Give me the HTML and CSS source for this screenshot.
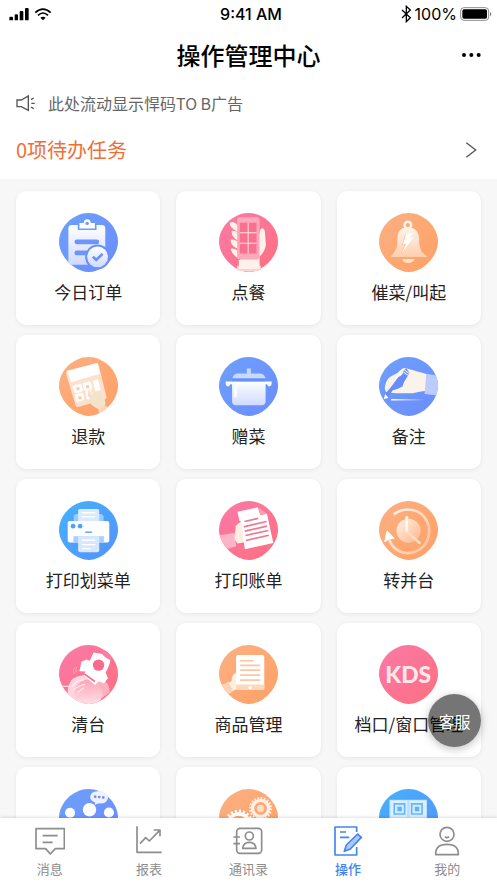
FILE: index.html
```html
<!DOCTYPE html>
<html lang="zh-CN">
<head>
<meta charset="utf-8">
<meta name="viewport" content="width=device-width, initial-scale=1">
<title>操作管理中心</title>
<link rel="stylesheet" href="styles.css">
</head>
<body>
<svg class="defs" aria-hidden="true">
  <defs>
    <path id="blob" d="M88 0C134 0 176 41 176 86C176 129 132 176 89 176C46 176 0 129 0 86C0 41 43 0 88 0Z"/>
    <clipPath id="clip"><use href="#blob"/></clipPath>
    <linearGradient id="blue" x1="0" y1="0" x2="1" y2="1"><stop offset="0" stop-color="#6da0fb"/><stop offset="1" stop-color="#6c8cfd"/></linearGradient>
    <linearGradient id="sky" x1="0" y1="0" x2="1" y2="1"><stop offset="0" stop-color="#44b2fb"/><stop offset="1" stop-color="#5592fd"/></linearGradient>
    <linearGradient id="pink" x1="0" y1="0" x2="1" y2="1"><stop offset="0" stop-color="#fb7aa8"/><stop offset="1" stop-color="#fe6f80"/></linearGradient>
    <linearGradient id="orange" x1="0" y1="0" x2="1" y2="1"><stop offset="0" stop-color="#fcb082"/><stop offset="1" stop-color="#fea066"/></linearGradient>
    <linearGradient id="paper" x1="0" y1="0" x2="0" y2="1"><stop offset="0" stop-color="#fff"/><stop offset="1" stop-color="#cfdafe"/></linearGradient>
    <linearGradient id="bell" x1="0" y1="0" x2="0" y2="1"><stop offset="0" stop-color="#fff4ec"/><stop offset="1" stop-color="#fecfae"/></linearGradient>
    <linearGradient id="moon" x1="0" y1="0" x2="0" y2="1"><stop offset="0" stop-color="#fda5b8"/><stop offset="1" stop-color="#ffe3e9"/></linearGradient>
    <linearGradient id="line" x1="0" y1="0" x2="1" y2="0"><stop offset="0" stop-color="#fff"/><stop offset="1" stop-color="#fff" stop-opacity="0"/></linearGradient>
    <linearGradient id="arc" gradientUnits="userSpaceOnUse" x1="190" y1="90" x2="290" y2="170"><stop offset="0" stop-color="#fff4ea"/><stop offset="1" stop-color="#fec9a4"/></linearGradient>
    <linearGradient id="dial" x1="0" y1="0" x2="1" y2="1"><stop offset="0" stop-color="#fff2e6"/><stop offset="1" stop-color="#fdb588"/></linearGradient>
  </defs>
</svg>
<div class="app">
  <div class="status">
    <div class="status-side">
      <svg width="20" height="14" viewBox="27 18 60 42"><path d="M28 50q0-3 3-3h5q3 0 3 3v8H28zM44 43q0-3 3-3h4q3 0 3 3v15H44zM59 33q0-3 3-3h5q3 0 3 3v25H59zM75 24q0-3 3-3h5q3 0 3 3v34H75z"/></svg>
      <svg width="18" height="14" viewBox="101 18 54 42"><path d="M105 35q23-21 46 0M113 43q15-14 30 0" fill="none" stroke="#000" stroke-width="5"/><path d="M120 50q8-6 16 0l-8 8z"/></svg>
    </div>
    <div class="time">9:41 AM</div>
    <div class="status-side status-right">
      <svg width="11" height="18" viewBox="459 13 33 54"><path d="M462 28L487 51L475 63V17L487 28L462 52" fill="none" stroke="#000" stroke-width="4"/></svg>
      <span>100%</span>
      <svg width="33" height="16" viewBox="635 15 99 48"><rect x="637" y="20" width="84" height="38" rx="10" fill="none" stroke="#8c8c8c" stroke-width="3"/><rect x="642" y="25" width="74" height="28" rx="5"/><path d="M725 33q8 6 0 13z" fill="#777"/></svg>
    </div>
  </div>
  <header class="titlebar">
    <h1>操作管理中心</h1>
    <button class="more"><svg width="20" height="8" viewBox="0 0 60 24"><circle cx="9" cy="12" r="6"/><circle cx="31" cy="12" r="6"/><circle cx="53" cy="12" r="6"/></svg></button>
  </header>
  <div class="notice">
    <svg width="20" height="18" viewBox="50 282 60 54" fill="none" stroke="#555" stroke-width="4"><path d="M53 300V320H66L87 331V288L66 300ZM95 299l8-5M96 310h10M95 321l8 5"/></svg>
    <span>此处流动显示悍码TO B广告</span>
  </div>
  <a class="todo" href="#">
    <span>0项待办任务</span>
    <svg width="12" height="18" viewBox="653 426 36 54"><path d="M657 431L685 453L657 475" fill="none" stroke="#555" stroke-width="4"/></svg>
  </a>
  <main class="grid">
    <button class="card">
      <svg class="icon" viewBox="0 0 176 176"><use href="#blob" fill="url(#blue)"/><g transform="translate(-147 -83)">
        <rect x="175" y="119" width="110" height="118" rx="10" fill="url(#paper)"/>
        <path d="M203 134V113H217Q217 98 232 98T247 113H259V134Z" fill="#6c9afb"/>
        <path d="M208 129V113H221Q221 102 231 102T242 113H254V129Z" fill="#fff"/><circle cx="231" cy="114" r="5" fill="#6c9afb"/>
        <path d="M200 169H260M200 202H238" stroke="#6b95fb" stroke-width="14" stroke-linecap="round"/>
        <circle cx="262" cy="214" r="37" fill="#6b8ffc"/><circle cx="262" cy="214" r="31" fill="url(#paper)"/>
        <path d="M248 213L258 223L277 205" fill="none" stroke="#6b8ffc" stroke-width="8"/></g></svg>
      <span>今日订单</span>
    </button>
    <button class="card">
      <svg class="icon" viewBox="0 0 176 176"><use href="#blob" fill="url(#pink)"/><g transform="translate(-148 -82)" fill="#fdf1e9">
        <path d="M264 165L271 133Q274 125 280 128Q285 131 285 139L288 178Q284 198 269 212V224H211V200H264Z"/>
        <path d="M182 112Q191 107 203 120L216 140Q206 142 196 132Q181 122 182 112ZM187 137Q197 135 213 151L215 167Q187 158 187 137ZM184 163Q194 160 211 174L213 190Q186 184 184 163ZM184 190Q193 186 211 202L212 216Q191 212 184 190Z" stroke="#fdf1e9" stroke-width="3"/>
        <path d="M202 239H273V253Q238 261 202 253Z" fill="#fcd0d4"/><path d="M207 222H269V249H207Z"/>
        <rect x="202" y="95" width="67" height="126" rx="9" fill="#fda9bb"/>
        <path d="M210 111H260V203H210Z" fill="#f9718f"/><path d="M235 111V203M210 141H260M210 172H260" stroke="#fde6e6" stroke-width="3"/></g></svg>
      <span>点餐</span>
    </button>
    <button class="card">
      <svg class="icon" viewBox="0 0 176 176"><use href="#blob" fill="url(#orange)"/><g transform="translate(-149 -82)">
        <circle cx="235" cy="118" r="10" fill="none" stroke="#fff3ea" stroke-width="7"/>
        <path d="M235 124C207 126 204 145 204 164C204 190 195 199 184 211V213H291V211C275 199 269 188 269 164C269 145 263 126 235 124Z" fill="url(#bell)"/>
        <path d="M217 219H256Q249 231 236 231T217 219Z" fill="#fee2cd"/>
        <path d="M226 148L243 144L238 159L252 155L214 205L226 176L218 178Z" fill="#fda574" opacity=".65"/>
        <path d="M230 145L249 142L240 157L253 154L216 203L230 173L220 176Z" fill="#fff"/></g></svg>
      <span>催菜/叫起</span>
    </button>
    <button class="card">
      <svg class="icon" viewBox="0 0 176 176"><use href="#blob" fill="url(#orange)"/><g clip-path="url(#clip)"><g transform="translate(-147 -65)">
        <path d="M174 106L257 84Q264 83 266 91L289 186L284 192L204 214Q198 215 196 208L168 115Q167 108 174 106Z" fill="#fee0cc"/>
        <path d="M171 106L262 83L269 115L183 140Z" fill="#fff"/>
        <path d="M190 150l19-5q5-1 6 4l3 14q1 5-4 6l-14 4q-6 1-7-4l-5-13q-1-5 2-6ZM221 142l15-4q6-1 7 5l3 13q1 5-4 6l-14 4q-5 1-7-5l-3-13q-1-5 3-6ZM197 176l16-4q6-1 7 4l2 13q1 5-4 6l-14 4q-5 1-6-5l-3-12q-1-5 2-6ZM226 168l16-4 8 22-14 6q-6 1-8-5ZM247 136l16-5 9 32-16 5Z" fill="#fff"/>
        <path d="M199 155h9v9h-9zM228 149h9v9h-9zM205 182h9v9h-9zM233 174h8v9h-8z" fill="#fdc8a8"/>
        <path d="M233 169Q236 163 241 169L246 178Q254 169 264 170Q277 174 278 186Q290 199 283 211L289 220L268 235L266 221Q242 210 240 199Z" fill="#f3e3ca"/>
        <path d="M264 222L288 210L297 222L268 242Z" fill="#fed3b9"/></g></g></svg>
      <span>退款</span>
    </button>
    <button class="card">
      <svg class="icon" viewBox="0 0 176 176"><use href="#blob" fill="url(#blue)"/><g transform="translate(-627 -65)">
        <path d="M710 114V99H722V114ZM667 129Q669 115 682 114H750Q763 115 766 129Z" fill="#c8d9ff"/>
        <path d="M647 138H784V145Q783 153 775 153L770 146H766V198Q766 209 754 209H678Q666 209 666 198V146H661L656 153Q648 153 647 145Z" fill="url(#paper)"/>
        <rect x="673" y="148" width="7" height="38" rx="3" fill="#fff"/><path d="M666 129H766V137H666Z" fill="#6791fa"/></g></svg>
      <span>赠菜</span>
    </button>
    <button class="card">
      <svg class="icon" viewBox="0 0 176 176"><use href="#blob" fill="url(#blue)"/><g clip-path="url(#clip)"><g transform="translate(-149 -65)">
        <path d="M170 170L166 158Q169 132 184 123L205 112Q216 98 227 98L291 116L289 166Q270 168 250 173H200Z" fill="#faf3e9"/>
        <path d="M290 115L325 121V180L285 175Z" fill="#bdccff"/>
        <path d="M182 158L207 125Q221 119 221 108L230 98L240 112L231 128Q222 141 219 153Q205 161 190 164L175 186L166 176Z" fill="#668dfa"/>
        <path d="M225 104L239 114M222 110L235 119" stroke="#faf3e9" stroke-width="3"/><path d="M163 190L168 175L177 187Z" fill="#fff"/>
        <path d="M185 190H286V195H185Z" fill="url(#line)"/></g></g></svg>
      <span>备注</span>
    </button>
    <button class="card">
      <svg class="icon" viewBox="0 0 176 176"><use href="#blob" fill="url(#sky)"/><g transform="translate(-147 -63)">
        <path d="M191 124V106L197 102H274L280 108V124Z" fill="#9acbff"/><rect x="204" y="87" width="63" height="46" rx="5" fill="#d7eaff"/>
        <path d="M215 98H255M215 110H255" stroke="#fff" stroke-width="4"/>
        <rect x="173" y="123" width="124" height="64" rx="6" fill="#fff"/><circle cx="189" cy="138" r="7" fill="#50a1fc"/><circle cx="210" cy="138" r="7" fill="#50a1fc"/>
        <path d="M225 156H246" stroke="#50a1fc" stroke-width="4"/><path d="M190 168H281V187H190Z" fill="#a6cffe"/><path d="M204 168H267V210Q267 216 261 216H210Q204 216 204 210Z" fill="#d6e8ff"/>
        <path d="M216 180H255M216 193H255M216 205H241" stroke="#fff" stroke-width="4"/></g></svg>
      <span>打印划菜单</span>
    </button>
    <button class="card">
      <svg class="icon" viewBox="0 0 176 176"><use href="#blob" fill="url(#pink)"/><g clip-path="url(#clip)"><g transform="translate(-627 -63)">
        <path d="M627 166L674 158L678 198L638 210Z" fill="#feb3c7"/><path d="M694 123L677 137L673 176L682 190L704 186Z" fill="#fdefe4"/>
        <path d="M682 95L743 82L750 105L770 101L789 188L704 207L693 124L688 122Z" fill="#fff"/><path d="M746 83L770 101L750 105Z" fill="#fca0b0"/>
        <path d="M703 124L744 115M701 140L769 124M704 153L770 138M706 166L774 151M707 181L776 165" stroke="#ef7893" stroke-width="5"/></g></g></svg>
      <span>打印账单</span>
    </button>
    <button class="card">
      <svg class="icon" viewBox="0 0 176 176"><use href="#blob" fill="url(#orange)"/><g transform="translate(-149 -63)">
        <path d="M193 103C227 78 274 86 292 123C309 161 292 203 255 215C223 226 192 210 180 180" fill="none" stroke="url(#arc)" stroke-width="8"/>
        <path d="M173 153L193 174L181 176L166 184Z" fill="#fff" stroke="#fff" stroke-width="3" stroke-linejoin="round"/><circle cx="237" cy="152" r="36" fill="url(#dial)"/>
        <path d="M232 112V154L270 188" fill="none" stroke="#ffdcc2" stroke-width="8" stroke-linecap="round" stroke-linejoin="round"/><path d="M232 112V151" stroke="#fff7ee" stroke-width="8" stroke-linecap="round"/></g></svg>
      <span>转并台</span>
    </button>
    <button class="card">
      <svg class="icon" viewBox="0 0 176 176"><use href="#blob" fill="url(#pink)"/><g clip-path="url(#clip)"><g transform="translate(-147 -60)">
        <path d="M254 180Q263 157 278 162Q299 172 298 202L276 218Z" fill="#fdb0c0"/>
        <path d="M172 214Q172 180 184 165Q196 151 222 150L248 174L225 231L194 230Z" fill="#ffd3df"/>
        <ellipse cx="235" cy="203" rx="42" ry="40" fill="url(#moon)"/>
        <path d="M154 183H183M185 185Q196 167 222 164M190 193Q210 180 225 177M202 202L222 187" fill="none" stroke="#fff0f3" stroke-width="3"/>
        <path d="M275 78Q285 73 297 78Q306 87 302 101L290 109L272 90Z" fill="#fc7ca3"/>
        <path d="M250 82Q263 84 276 87Q283 98 300 105Q299 119 286 142L293 159L281 174L265 168L255 179L220 151L226 139L208 138L214 110L229 103L239 107Z" fill="#fff"/>
        <circle cx="265" cy="120" r="17" fill="#f96a91"/><path d="M222 146L254 169" stroke="#f86b90" stroke-width="5"/>
        <path d="M193 126q-6 10 0 20M200 125q-5 10 0 17" fill="none" stroke="#fdb5ca" stroke-width="2"/></g></g></svg>
      <span>清台</span>
    </button>
    <button class="card">
      <svg class="icon" viewBox="0 0 176 176"><use href="#blob" fill="url(#orange)"/><g clip-path="url(#clip)"><g transform="translate(-627 -60)">
        <path d="M634 180L657 168L674 195L655 207Z" fill="#fed2b6"/><path d="M679 141Q662 151 665 167L656 174L669 195L687 190Z" fill="#fff0df"/>
        <rect x="678" y="90" width="84" height="104" rx="5" fill="#fff"/><path d="M678 178H762V189Q762 194 757 194H683Q678 194 678 189Z" fill="#fed8bd"/><circle cx="720" cy="187" r="5" fill="#fff"/>
        <path d="M689 107H729M690 121H750M690 135H750M690 150H750M690 165H750" stroke="#fcc6a4" stroke-width="5"/></g></g></svg>
      <span>商品管理</span>
    </button>
    <button class="card">
      <svg class="icon" viewBox="0 0 176 176"><use href="#blob" fill="url(#pink)"/><text class="kds" x="87" y="114" text-anchor="middle">KDS</text></svg>
      <span>档口/窗口管理</span>
    </button>
    <button class="card">
      <svg class="icon" viewBox="0 0 176 176"><use href="#blob" fill="url(#blue)"/><g clip-path="url(#clip)"><g transform="translate(-177 -75)" fill="#fff">
        <circle cx="210" cy="146" r="15"/><circle cx="268" cy="137" r="20"/><circle cx="326" cy="145" r="15"/><path d="M190 185q20-35 40 0v40h-40zM240 180q28-30 56 0v50h-56zM306 185q20-35 40 0v40h-40z"/></g></g>
        <g transform="translate(-177 -75)" fill="#6d8ffc"><path d="M291 82H306Q323 84 323 101Q321 117 304 118Q292 117 283 123L285 115Q270 111 270 99Q272 83 291 82Z" fill="#eef2ff"/><circle cx="285" cy="98" r="4"/><circle cx="297" cy="99" r="4"/><circle cx="309" cy="100" r="4"/></g></svg>
    </button>
    <button class="card">
      <svg class="icon" viewBox="0 0 176 176"><use href="#blob" fill="url(#orange)"/><g clip-path="url(#clip)"><g transform="translate(-657 -75)" fill="none">
        <circle cx="781" cy="133" r="31" stroke="#fff1e7" stroke-width="7" stroke-dasharray="5 4.7"/><circle cx="781" cy="133" r="24" stroke="#fff1e7" stroke-width="10"/><circle cx="781" cy="133" r="11" fill="#ffe0ca"/>
        <circle cx="716" cy="180" r="39" stroke="#fff" stroke-width="9" stroke-dasharray="6 6.2"/><circle cx="716" cy="180" r="31" stroke="#fff" stroke-width="11"/></g></g></svg>
    </button>
    <button class="card">
      <svg class="icon" viewBox="0 0 176 176"><use href="#blob" fill="url(#sky)"/><g transform="translate(-1139 -75)">
        <path d="M1170 107H1282V205H1170Z" fill="#b9e0ff"/><path d="M1173 109H1223V160H1173ZM1230 109H1280V160H1230Z" fill="#dceeff"/>
        <path d="M1182 117H1218V152H1182ZM1234 117H1270V152H1234Z" fill="#65b8fd"/><path d="M1187 122H1213V147H1187ZM1239 122H1265V147H1239Z" fill="#d5ebff"/><path d="M1194 128H1207V141H1194ZM1246 128H1259V141H1246Z" fill="#5cb0fc"/></g></svg>
    </button>
  </main>
  <nav class="tabs">
    <a href="#"><svg viewBox="104 183 90 90"><path d="M107 191H192V251H165L150 267L136 251H107Z"/><path d="M127 212H172M127 232H157"/></svg><span>消息</span></a>
    <a href="#"><svg viewBox="403 183 90 90"><path d="M412 184V262H486M421 236L438 218L449 228L480 196M462 195H481V214"/></svg><span>报表</span></a>
    <a href="#"><svg viewBox="701 183 90 90"><rect x="712" y="190" width="75" height="75" rx="10"/><circle cx="750" cy="213" r="12"/><path d="M730 250Q732 232 750 232T770 250ZM702 216H722M702 236H722"/></svg><span>通讯录</span></a>
    <a href="#" class="active"><svg viewBox="999 183 90 90"><path d="M1070 201V186H1005V270H1070V246M1020 201H1038M1020 217H1048"/><path d="M1073 207L1084 217L1051 252L1033 259L1039 240Z" fill="#a9cafb"/></svg><span>操作</span></a>
    <a href="#"><svg viewBox="1297 183 90 90"><circle cx="1342" cy="208" r="21"/><path d="M1336 215Q1342 221 1348 215M1308 269Q1307 238 1342 238T1376 269Z"/></svg><span>我的</span></a>
  </nav>
  <button class="service">客服</button>
</div>
</body>
</html>
```

FILE: styles.css
```css
* { box-sizing: border-box; }
body {
  margin: 0;
  background: #fff;
  color: #222;
  font-family: "Noto Sans CJK SC", "Noto Sans", sans-serif;
}
button {
  margin: 0;
  padding: 0;
  border: 0;
  background: none;
  color: inherit;
  font: inherit;
}
a { color: inherit; text-decoration: none; }
svg { display: block; flex: none; }
.defs { position: absolute; width: 0; height: 0; }
.app {
  position: relative;
  display: flex;
  flex-direction: column;
  height: 100vh;
  overflow: hidden;
}
.status {
  display: grid;
  grid-template-columns: 1fr auto 1fr;
  align-items: center;
  height: 28px;
  flex: none;
  padding: 0 4px 0 9px;
  color: #000;
  font: 16px/20px Inter, sans-serif;
}
.time { font-weight: 500; }
.status-side { display: flex; align-items: center; gap: 5px; }
.status-right { justify-content: flex-end; gap: 3px; }
.titlebar {
  display: grid;
  grid-template-columns: 1fr auto 1fr;
  align-items: center;
  height: 54px;
  flex: none;
  padding: 0 16px;
}
.titlebar h1 {
  grid-column: 2;
  margin: 0;
  color: #000;
  font-size: 24px;
  line-height: 32px;
  font-weight: 500;
}
.more { justify-self: end; }
.notice {
  display: flex;
  align-items: center;
  gap: 12px;
  height: 42px;
  flex: none;
  padding: 0 16px;
  color: #666;
  font-size: 16px;
}
.todo {
  display: flex;
  align-items: center;
  justify-content: space-between;
  height: 56px;
  flex: none;
  padding: 0 20px 4px 16px;
  border-bottom: 1px solid #f7f7f7;
  color: #ee7036;
  font-size: 20px;
}
.grid {
  display: grid;
  grid-template-columns: repeat(3, 1fr);
  grid-auto-rows: 134px;
  gap: 10px 16px;
  flex: 1;
  min-height: 0;
  overflow: hidden;
  padding: 11px 16px;
  background: #f7f7f7;
}
.card {
  display: flex;
  flex-direction: column;
  align-items: center;
  gap: 8px;
  padding-top: 22px;
  border-radius: 10px;
  background: #fff;
  box-shadow: 0 1px 4px rgba(0, 0, 0, .07);
  font-size: 17px;
  line-height: 24px;
  white-space: nowrap;
}
.icon { width: 59px; height: 59px; }
.kds { fill: #ffe8ec; font: 900 68px Lato, sans-serif; }
.tabs {
  position: relative;
  display: grid;
  grid-template-columns: repeat(5, 1fr);
  flex: none;
  padding: 8px 0 5px;
  background: #fff;
  box-shadow: 0 -1px 3px rgba(0, 0, 0, .12);
  color: #8d8d8d;
  font-size: 13px;
  line-height: 18px;
}
.tabs a {
  display: flex;
  flex-direction: column;
  align-items: center;
  gap: 4px;
}
.tabs svg {
  width: 30px;
  height: 30px;
  fill: none;
  stroke: currentColor;
  stroke-width: 5;
  stroke-linejoin: round;
}
.tabs .active { color: #4285f0; font-weight: 500; }
.service {
  position: absolute;
  right: 16px;
  bottom: 136px;
  width: 53px;
  height: 53px;
  border-radius: 50%;
  background: rgba(0, 0, 0, .54);
  box-shadow: 0 2px 8px rgba(0, 0, 0, .25);
  color: #fff;
  font-size: 16px;
}
```
